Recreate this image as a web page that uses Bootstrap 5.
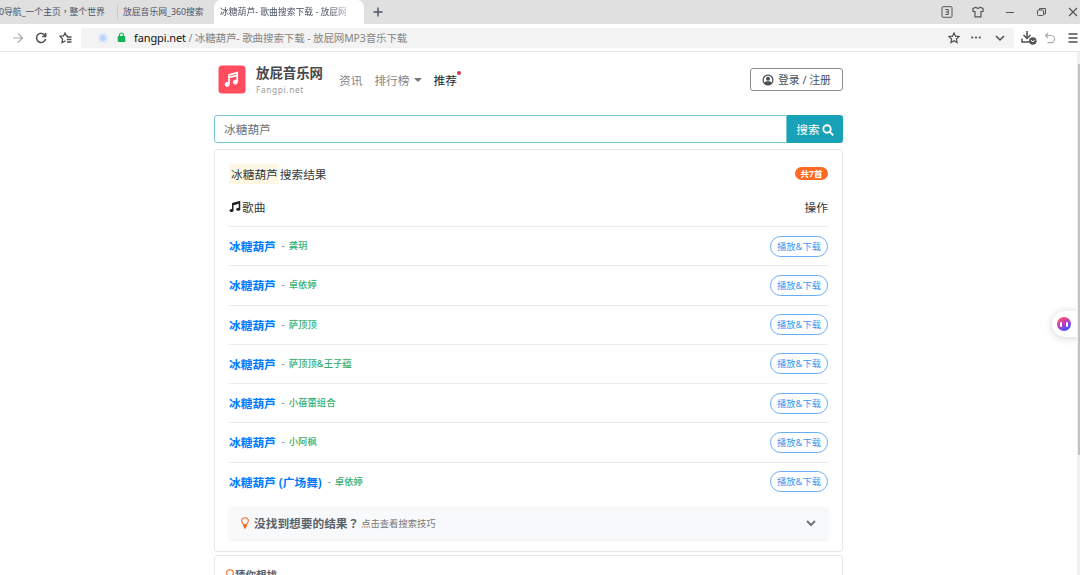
<!DOCTYPE html>
<html lang="zh-CN">
<head>
<meta charset="utf-8">
<meta name="viewport" content="width=device-width, initial-scale=1">
<title>冰糖葫芦 - 歌曲搜索下载</title>
<link rel="stylesheet" href="https://cdn.jsdelivr.net/npm/bootstrap@5.3.0/dist/css/bootstrap.min.css">
<style>
html,body{height:575px;overflow:hidden}
body{font-family:"Noto Sans","Noto Sans CJK SC",sans-serif;font-size:11.7px;line-height:18px;color:#343a40;background:#fff}
svg{display:block;flex:none;fill:none;stroke:currentColor}
.punct{font-family:"Noto Sans CJK TC",sans-serif;line-height:1}
.tabs{height:24px;background:#e0e0e0;font-size:8.8px;color:#4b5263;line-height:24px}
.tab-a{width:118px;border-right:1px solid #c8c8c8;height:14px;line-height:14px}
.tab-b{width:96px;padding-left:5px}
.tab-on{width:150px;height:24px;background:#fff;border-radius:7px 7px 0 0;padding-left:6px}
.tab-on span{display:block;width:133px;-webkit-mask-image:linear-gradient(90deg,#000 85%,transparent)}
.toolbar{height:28px;border-bottom:1px solid #e8e8e8;color:#505050}
.address{height:20px;width:933px;background:#f3f3f3;border-radius:3px;font-size:10.5px;color:#858585;padding-left:17px;line-height:20px}
.address b{font-weight:400;color:#111;font-size:11px}
.address .url{letter-spacing:-.12px}
.page{height:523px;width:1078px}
.wrap{width:629px;margin-left:214px}
.site-head{height:63px;padding:0 0 0 4px}
.brand-name{font-size:13.4px;line-height:18px;font-weight:700;color:#454a4e}
.brand-sub{font-size:8.4px;line-height:15px;letter-spacing:.6px;color:#999}
.menu{color:#858585;line-height:18px}
.caret{width:0;height:0;border:4px solid transparent;border-top-color:#777;border-bottom:0}
.dot{width:4px;height:4px;background:#dc3545;top:0;right:-4px}
.login{width:93px;height:23px;border:1px solid #868e94;border-radius:3px;font-size:10.8px;color:#495057}
.search{height:28px}
.search .form-control{border:1px solid #74c6d2;border-radius:3px 0 0 3px;font-size:11.7px;padding:0 9px;color:#6c757d;line-height:27px}
.search .btn{width:56px;flex:none;background:#17a2b8;color:#fff;border-radius:0 3px 3px 0;font-size:11.7px;padding-top:2px!important}
.panel{border:1px solid #e7e8e9;border-radius:3px;padding:0 14px}
.hit{background:#fcf8e3;padding:2px 1px 2px 2px;line-height:16px;margin-right:1px}
.total{background:#fd6a22;font-size:8.5px;line-height:13px;padding:0 4px;height:13px;width:33px;margin-top:-2px}
.song{height:39.25px;border-top:1px solid #e9ebec}
.song-name{color:#007bff;font-weight:700}
.artist{font-size:9.35px;color:#35ae70;font-weight:500;margin-left:6px}
.artist i{font-style:normal;color:#888;margin-right:4px}
.play{width:58px;height:21px;border:1px solid #67aef5;color:#3c96ef;font-size:9.3px;line-height:20px}
.tips{height:32px;background:#f8f9fa;padding:0 12px 0 11px;box-shadow:0 1px 3px #00000014;margin-top:6px}
.side{right:0;top:311px;width:28px;height:26px;border-radius:13px 0 0 13px;background:#fff;box-shadow:0 1px 8px #0000002e;padding-left:5px;z-index:2}
.face{width:14px;height:14px;background:linear-gradient(150deg,#ff4f67 15%,#b43ed0 50%,#4a55ff 80%)}
.face i{width:2px;height:5px;background:#fff;border-radius:1px}
.scroll{right:0;top:52px;width:3px;height:523px;background:#f1f1f1;z-index:3}
.scroll div{height:391px;margin:12px 0 0 1px;background:#c1c1c1;width:2px}
</style>
<script src="https://cdn.jsdelivr.net/npm/bootstrap@5.3.0/dist/js/bootstrap.bundle.min.js"></script>
</head>
<body>
<svg width="0" height="0" class="position-absolute"><defs>
<symbol id="note" viewBox="0 0 16 16"><path d="M5 12V3.500L14 1v9.500M5 5l9-2.500" stroke-width="2"/><ellipse cx="3.400" cy="12.700" rx="2.700" ry="2" fill="currentColor" stroke="none"/><ellipse cx="12.300" cy="11" rx="2.700" ry="2" fill="currentColor" stroke="none"/></symbol>
<symbol id="bulb" viewBox="0 0 10 12"><path d="M3.500 7.500C3.500 6.500 1.700 5.800 1.700 3.900a3.300 3.100 0 0 1 6.600 0C8.300 5.800 6.500 6.500 6.500 7.500z" stroke-width="1.100"/><path d="M3.200 8.900h3.600M4 10.500h2" stroke-width="2"/></symbol>
</defs></svg>

<header>
<div class="tabs d-flex align-items-center text-nowrap">
  <div class="tab-a overflow-hidden"><span style="margin-left:-1px">0导航_一个主页<span class="punct" lang="zh-TW">，</span>整个世界</span></div>
  <div class="tab-b">放屁音乐网_360搜索</div>
  <div class="tab-on"><span class="overflow-hidden">冰糖葫芦- 歌曲搜索下载 - 放屁网</span></div>
  <svg class="ms-2" width="12" height="12" viewBox="0 0 12 12" stroke-width="1.400"><path d="M6 1.500v9M1.500 6h9"/></svg>
  <div class="ms-auto d-flex align-items-center" style="color:#555;margin-right:1px">
    <svg width="12" height="12" viewBox="0 0 12 12"><rect x="1" y=".7" width="10" height="10.600" rx="1"/><path d="M4.300 3.500h3v4.900h-3M4.700 5.900h2.600"/></svg>
    <svg style="margin-left:19px" width="12" height="12" viewBox="0 0 12 12" stroke-width="1.200"><path d="M4 1.200 1 2.500v3h2v5.300h6V5.500h2v-3L8 1.200c-.8 1.500-3.200 1.500-4 0z"/></svg>
    <svg style="margin-left:20px" width="12" height="12" viewBox="0 0 12 12"><path d="M2 6.500h8"/></svg>
    <svg style="margin-left:20px" width="12" height="12" viewBox="0 0 12 12"><rect x="1.500" y="4" width="6" height="5.500" rx="1"/><path d="M3.500 4V2.500h6v5.500h-2"/></svg>
    <svg style="margin-left:19px" width="12" height="12" viewBox="0 0 12 12" stroke-width="1.200"><path d="m2 2 8 8M10 2l-8 8"/></svg>
  </div>
</div>
<div class="toolbar d-flex align-items-center">
  <svg style="margin-left:12px;color:#aaa" width="12" height="12" viewBox="0 0 12 12" stroke-width="1.200"><path d="M1 6h9.500M6 1.500 10.500 6 6 10.500"/></svg>
  <svg style="margin-left:11px" width="12" height="12" viewBox="0 0 12 12" stroke-width="1.500"><path d="M10 3.500A4.600 4.600 0 1 0 10.600 7M10.700 1v3.500H7.200"/></svg>
  <svg style="margin-left:12px" width="13" height="12" viewBox="0 0 13 12" stroke-width="1.300"><path d="M9 4 7.300 3.800 6 1 4.500 4 1 4.400 3.600 7 3 10.500l3.500-1.700M8 5h4.500M7.800 7.500h4.700M8 10h4.500"/></svg>
  <div class="address d-flex align-items-center text-nowrap" style="margin-left:9px">
    <svg width="10" height="10" viewBox="0 0 10 10"><g stroke="none"><circle cx="5" cy="5" r="4.800" fill="#dce5fb"/><circle cx="5" cy="5" r="2.800" fill="#bdd0fa"/></g></svg>
    <svg style="margin-left:9px" width="9" height="11" viewBox="0 0 9 11"><rect x=".7" y="4" width="7.600" height="6" rx=".8" fill="#11b456" stroke="none"/><path d="M2.500 4.500V3a2 2 0 0 1 4 0v1.500" stroke="#11b456" stroke-width="1.200"/></svg>
    <span class="url" style="margin-left:8px"><b>fangpi.net</b> / 冰糖葫芦- 歌曲搜索下载 - 放屁网MP3音乐下载</span>
    <div class="ms-auto d-flex align-items-center" style="color:#505050;padding-right:8px">
      <svg width="12" height="12" viewBox="0 0 12 12" stroke-width="1.200"><path d="m6 1 1.500 3.200 3.500.4-2.600 2.400.7 3.500L6 8.800l-3.100 1.700.7-3.500L1 4.600l3.500-.4z"/></svg>
      <svg style="margin-left:10px" width="12" height="12" viewBox="0 0 12 12"><g fill="currentColor" stroke="none"><circle cx="2.200" cy="5.500" r="1.100"/><circle cx="6" cy="5.500" r="1.100"/><circle cx="9.800" cy="5.500" r="1.100"/></g></svg>
      <svg style="margin-left:12px" width="12" height="12" viewBox="0 0 12 12" stroke-width="1.500"><path d="m2 4 4 4 4-4"/></svg>
    </div>
  </div>
  <svg style="margin-left:6px" width="17" height="15" viewBox="0 0 17 15" stroke-width="1.500"><path d="M7 1v7M3.500 5 7 8.500 10.500 5M2 8.500V12h7"/><circle cx="12.800" cy="11" r="3.800" fill="#555" stroke="none"/><path d="m11 10 1.800 2 1.800-2" stroke="#fff" stroke-width="1"/></svg>
  <svg style="margin-left:7px;color:#aaa" width="12" height="12" viewBox="0 0 12 12" stroke-width="1.200"><path d="M4 1 1.500 3.500 4 6M1.500 3.500H7a3.600 3.600 0 0 1 0 7.200H3.500"/></svg>
  <svg style="margin-left:11px" width="12" height="12" viewBox="0 0 12 12" stroke-width="1.300"><path d="M1.500 2h9M1.500 6h9M1.500 10h9"/></svg>
</div>
</header>

<main class="page overflow-hidden"><div class="wrap">
  <nav class="site-head d-flex align-items-start">
    <svg style="margin:13px 10px 0 0" width="28" height="29" viewBox="0 0 28 29"><rect x=".5" y=".5" width="27" height="28" rx="3.500" fill="#ff4c5e" stroke="none"/><g stroke="#fff" stroke-width="1.800"><path d="M11 19v-9l8.200-2.300v9M11 12.500l8-2.200"/><circle cx="9.100" cy="19.400" r="2" fill="#fff" stroke-width="1"/><circle cx="17.300" cy="17.100" r="2" fill="#fff" stroke-width="1"/></g></svg>
    <div style="padding-top:12px;width:84px"><div class="brand-name">放屁音乐网</div><div class="brand-sub">Fangpi.net</div></div>
    <div class="menu d-flex align-items-center" style="padding-top:19px;margin-left:-1px"><span>资讯</span><span style="margin-left:12px">排行榜</span><span class="caret" style="margin-left:5px"></span><span class="position-relative text-dark" style="margin-left:11px">推荐<i class="dot rounded-circle position-absolute"></i></span></div>
    <a class="login ms-auto d-flex align-items-center justify-content-center text-decoration-none" style="margin-top:16px"><svg class="me-1" width="12" height="12" viewBox="0 0 12 12"><circle cx="6" cy="6" r="4.900" stroke-width="1.200"/><circle cx="6" cy="4.700" r="2" fill="currentColor" stroke="none"/><path d="M2 9c1-2.500 7-2.500 8 0-2 2.500-6 2.500-8 0" fill="currentColor" stroke="none"/></svg>登录 / 注册</a>
  </nav>
  <form class="search d-flex"><div class="form-control">冰糖葫芦</div><button type="button" class="btn p-0 d-flex align-items-center justify-content-center">搜索<svg style="margin-left:2px" width="12" height="12" viewBox="0 0 12 12" stroke-width="1.900"><circle cx="5" cy="5" r="3.700"/><path d="m7.800 7.800 3.500 3.500"/></svg></button></form>
  <section class="panel" style="margin-top:6px;height:403px">
    <div class="d-flex justify-content-between align-items-center" style="padding-top:15px;height:33px"><div><span class="hit">冰糖葫芦</span>搜索结果</div><span class="badge rounded-pill total">共7首</span></div>
    <div class="d-flex align-items-center" style="padding-top:5px;height:43px"><svg width="12" height="12" class="text-dark"><use href="#note"/></svg><span style="margin-left:1px">歌曲</span><span class="ms-auto">操作</span></div>
    <div class="song d-flex align-items-center"><span class="song-name">冰糖葫芦</span><span class="artist"><i>-</i>龚玥</span><a class="play btn rounded-pill p-0 ms-auto">播放&amp;下载</a></div>
    <div class="song d-flex align-items-center"><span class="song-name">冰糖葫芦</span><span class="artist"><i>-</i>卓依婷</span><a class="play btn rounded-pill p-0 ms-auto">播放&amp;下载</a></div>
    <div class="song d-flex align-items-center"><span class="song-name">冰糖葫芦</span><span class="artist"><i>-</i>萨顶顶</span><a class="play btn rounded-pill p-0 ms-auto">播放&amp;下载</a></div>
    <div class="song d-flex align-items-center"><span class="song-name">冰糖葫芦</span><span class="artist"><i>-</i>萨顶顶&amp;王子蕴</span><a class="play btn rounded-pill p-0 ms-auto">播放&amp;下载</a></div>
    <div class="song d-flex align-items-center"><span class="song-name">冰糖葫芦</span><span class="artist"><i>-</i>小蓓蕾组合</span><a class="play btn rounded-pill p-0 ms-auto">播放&amp;下载</a></div>
    <div class="song d-flex align-items-center"><span class="song-name">冰糖葫芦</span><span class="artist"><i>-</i>小阿枫</span><a class="play btn rounded-pill p-0 ms-auto">播放&amp;下载</a></div>
    <div class="song d-flex align-items-center"><span class="song-name">冰糖葫芦 (广场舞)</span><span class="artist"><i>-</i>卓依婷</span><a class="play btn rounded-pill p-0 ms-auto">播放&amp;下载</a></div>
    <div class="tips d-flex align-items-center"><svg width="10" height="12" style="color:#fd6a22"><use href="#bulb"/></svg><b style="margin-left:4px;color:#5b636a">没找到想要的结果<span class="punct" lang="zh-TW">？</span></b><span style="font-size:9.3px;color:#777;margin:2px 0 0 2px">点击查看搜索技巧</span><svg class="ms-auto" width="10" height="10" viewBox="0 0 10 10" stroke-width="2" style="color:#6c757d"><path d="m1 3 4 4 4-4"/></svg></div>
  </section>
  <section class="panel" style="margin-top:3px;height:60px;padding:10px"><div class="d-flex align-items-center"><svg width="10" height="12" style="color:#fd6a22"><use href="#bulb"/></svg><b style="font-size:10.5px;color:#5b636a">猜你想找</b></div></section>
</div></main>
<aside class="side position-absolute d-flex align-items-center"><div class="face rounded-circle d-flex align-items-center justify-content-center gap-1"><i></i><i></i></div></aside>
<div class="scroll position-absolute overflow-hidden"><div></div></div>
</body>
</html>
